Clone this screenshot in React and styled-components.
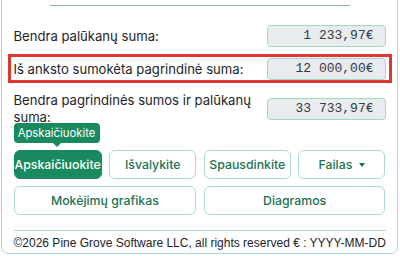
import React from "react";
import styled, { createGlobalStyle } from "styled-components";

const GlobalStyle = createGlobalStyle`
	* { box-sizing: border-box; }
	body {
		margin: 0;
		background: #ffffff;
		font-family: Inter, "Noto Sans", sans-serif;
		color: #212529;
	}
`;

const Page = styled.div`
	width: 400px;
	height: 256px;
	overflow: hidden;
	padding: 0 2px 0 1px;
`;

const Card = styled.div`
	margin-top: -12px;
	border: 1.5px solid #a9dcc6;
	border-radius: 7px;
	padding: 16px 11.5px 0 11.5px;
	height: 266px;
	display: flex;
	flex-direction: column;
`;

const TopRule = styled.div`
	width: 300px;
	height: 1px;
	background: #8fb5a8;
	align-self: center;
	margin-bottom: 19px;
`;

const Row = styled.div`
	display: grid;
	grid-template-columns: 1fr 119px;
	align-items: center;
	column-gap: 6px;
	margin-bottom: ${p => p.gap || 0}px;
`;

const HighlightRow = styled(Row)`
	margin: 0 -6px 9px;
	border: 3px solid #e1352f;
	padding: 1px 3px;
	height: 29px;
`;

const Label = styled.div`
	font-size: 13.1px;
	line-height: 17px;
	color: #212529;
`;

const Amount = styled.div`
	height: 22px;
	background: #e9ecef;
	border: 1px solid #a3d6bf;
	border-radius: 4px;
	font-family: "Liberation Mono", "DejaVu Sans Mono", monospace;
	font-size: 13px;
	line-height: 20px;
	text-align: right;
	padding-right: 11px;
	color: #333a40;
`;

const ButtonArea = styled.div`
	position: relative;
	margin-top: 24px;
	display: grid;
	grid-template-columns: repeat(4, 1fr);
	column-gap: 7.5px;
	row-gap: 7px;
`;

const Button = styled.div`
	grid-column: span ${p => p.span || 1};
	height: 29px;
	border-radius: 6px;
	border: 1px solid ${p => (p.primary ? "#188a5e" : "#a9dcc6")};
	background: ${p => (p.primary ? "#188a5e" : "#ffffff")};
	color: ${p => (p.primary ? "#ffffff" : "#1a7350")};
	font-size: 12.3px;
	font-weight: 500;
	display: flex;
	align-items: center;
	justify-content: center;
	gap: 7px;
`;

const Caret = styled.span`
	width: 0;
	height: 0;
	border-left: 3.5px solid transparent;
	border-right: 3.5px solid transparent;
	border-top: 4px solid #1a7350;
	margin-top: 1px;
`;

const Tooltip = styled.div`
	position: absolute;
	left: 0;
	top: -27px;
	width: 86px;
	height: 20px;
	border-radius: 4px;
	background: #188a5e;
	color: #ffffff;
	font-size: 11.3px;
	font-weight: 400;
	display: flex;
	align-items: center;
	justify-content: center;

	&::after {
		content: "";
		position: absolute;
		left: 39px;
		bottom: -4px;
		border-left: 4px solid transparent;
		border-right: 4px solid transparent;
		border-top: 4px solid #188a5e;
	}
`;

const BottomRule = styled.div`
	height: 1px;
	background: #a9dcc6;
	margin-top: 15px;
`;

const Footer = styled.div`
	font-family: "Liberation Sans", Arial, sans-serif;
	font-size: 12px;
	line-height: 16px;
	margin-top: 4px;
	color: #212529;
	white-space: nowrap;
`;

const App = () => {
	return (
		<Page>
			<GlobalStyle />
			<Card>
				<TopRule />
				<Row gap={7}>
					<Label>Bendra palūkanų suma:</Label>
					<Amount>1 233,97€</Amount>
				</Row>
				<HighlightRow>
					<Label>Iš anksto sumokėta pagrindinė suma:</Label>
					<Amount>12 000,00€</Amount>
				</HighlightRow>
				<Row>
					<Label>Bendra pagrindinės sumos ir palūkanų suma:</Label>
					<Amount>33 733,97€</Amount>
				</Row>
				<ButtonArea>
					<Tooltip>Apskaičiuokite</Tooltip>
					<Button primary>Apskaičiuokite</Button>
					<Button>Išvalykite</Button>
					<Button>Spausdinkite</Button>
					<Button>
						Failas <Caret />
					</Button>
					<Button span={2}>Mokėjimų grafikas</Button>
					<Button span={2}>Diagramos</Button>
				</ButtonArea>
				<BottomRule />
				<Footer>©2026 Pine Grove Software LLC, all rights reserved € : YYYY-MM-DD</Footer>
			</Card>
		</Page>
	);
};

export default App;
